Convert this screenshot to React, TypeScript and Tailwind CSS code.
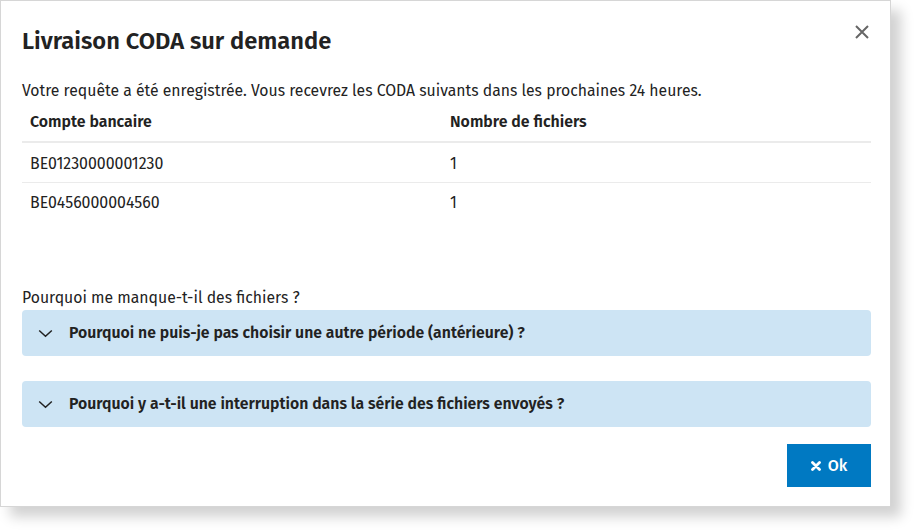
import React from "react";

const font = { fontFamily: '"Fira Sans", "Open Sans", "Noto Sans", sans-serif' };

function Chevron() {
  return (
    <svg width="15" height="9" viewBox="0 0 15 9" className="shrink-0">
      <path d="M1.2 1.5 L7.5 7.3 L13.8 1.5" fill="none" stroke="#222" strokeWidth="1.5" />
    </svg>
  );
}

function Accordion({ label }: { label: string }) {
  return (
    <div className="flex h-[46px] items-center rounded-[4px] bg-[#cde4f4] pl-[16px]">
      <Chevron />
      <span className="ml-[16px] text-[15.8px] font-semibold text-[#222]">{label}</span>
    </div>
  );
}

export default function App() {
  return (
    <div className="h-[530px] w-[914px] bg-white" style={font}>
      <div className="flex h-[507px] w-[891px] flex-col border border-[#d6d6d6] bg-white pl-[21px] pr-[19px] shadow-[10px_10px_12px_rgba(0,0,0,0.18)]">
        <div className="flex h-[80px] items-start justify-between pt-[24px]">
          <h1 className="text-[23.7px] font-semibold leading-[32px] text-[#222]">Livraison CODA sur demande</h1>
          <svg width="14" height="14" viewBox="0 0 14 14" className="mr-[2px] mt-[0px]">
            <path d="M1 1 L13 13 M13 1 L1 13" stroke="#666" strokeWidth="2" />
          </svg>
        </div>
        <p className="text-[15.75px] leading-[20px] text-[#222]">
          Votre requête a été enregistrée. Vous recevrez les CODA suivants dans les prochaines 24 heures.
        </p>
        <div className="mt-[2px] text-[15.9px] text-[#222]">
          <div className="flex h-[40px] items-center border-b-2 border-[#ebebeb] pl-[8px] font-semibold">
            <div className="w-[420px]">Compte bancaire</div>
            <div>Nombre de fichiers</div>
          </div>
          <div className="flex h-[40px] items-center border-b border-[#ebebeb] pl-[8px] pt-[2px]">
            <div className="w-[420px]">BE01230000001230</div>
            <div>1</div>
          </div>
          <div className="flex h-[40px] items-center pl-[8px]">
            <div className="w-[420px]">BE0456000004560</div>
            <div>1</div>
          </div>
        </div>
        <p className="mt-[65px] text-[15.75px] leading-[20px] text-[#222]">Pourquoi me manque-t-il des fichiers ?</p>
        <div className="mt-[2px] flex flex-col gap-[25px]">
          <Accordion label="Pourquoi ne puis-je pas choisir une autre période (antérieure) ?" />
          <Accordion label="Pourquoi y a-t-il une interruption dans la série des fichiers envoyés ?" />
        </div>
        <div className="mt-[17px] flex justify-end">
          <button className="flex h-[43px] w-[84px] items-center justify-center gap-[7px] bg-[#0079c2] text-[16px] font-medium text-white">
            <svg width="10" height="10" viewBox="0 0 10 10">
              <path d="M1.5 1.5 L8.5 8.5 M8.5 1.5 L1.5 8.5" stroke="#fff" strokeWidth="2.8" strokeLinecap="round" />
            </svg>
            <span>Ok</span>
          </button>
        </div>
      </div>
    </div>
  );
}
